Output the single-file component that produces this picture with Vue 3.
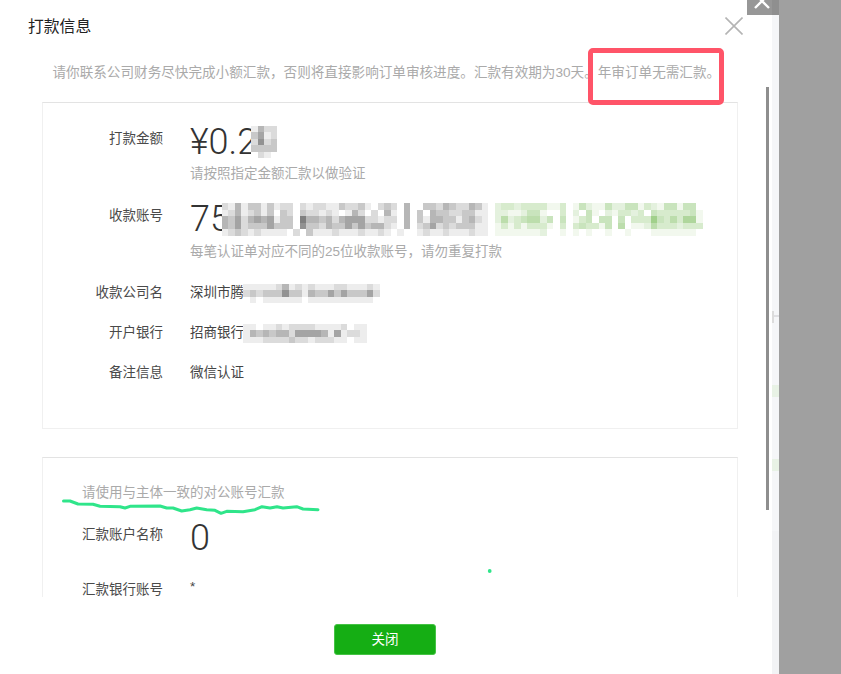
<script setup>
const GRAY = [62, 62, 62]
const GREEN = [126, 190, 96]

function cells(rows, greenFrom = Infinity) {
  const out = []
  rows.forEach((row, r) => {
    ;[...row].forEach((ch, c) => {
      const t = Number(ch) / 9 * 0.85
      const base = c >= greenFrom ? GREEN : GRAY
      const k = c >= greenFrom ? t * 1.1 : t
      const rgb = base.map((v) => Math.round(255 + (v - 255) * Math.min(k, 1)))
      out.push({ id: `${r}-${c}`, color: `rgb(${rgb.join(',')})` })
    })
  })
  return out
}

const amountMask = { cols: 4, cells: cells(['1422', '3512', '2623', '3333', '0210']) }
const accountMask = {
  cols: 74,
  cells: cells(
    [
      '21413313122021221132231' + '023204003324322431023323' + '333113014211422441321441440',
      '12412313032032212101420' + '204104030433223311022112' + '441003020410213323043333341',
      '43524545133074434245552' + '212204031443313421025234' + '552404013404404033374353661',
      '43523335333063324335353' + '442104023523233311013131' + '333103034331405011253332333',
      '12321211110203111211121' + '121010012112111211011111' + '112001010100100100011111110',
    ].map((r) => r.slice(0, 74)),
    41
  ),
}
const companyMask = {
  cols: 21,
  cells: cells(['111112412121112211121', '232333633143353533352', '010111111011111111110']),
}
const bankMask = {
  cols: 19,
  cells: cells(['1101121222211112011', '1434344255554151221', '1112222322122211011']),
}

const scribble =
  '63.5,501 70,501 78,504 93,504.3 100,506.3 120,506.7 125,508 130,506.3 160,506 166.7,508 173,508 181.7,511 190,509.7 196.7,508 206.7,509.7 215,510.3 221,513.3 226.7,511.3 243,511.7 255,509.7 262,506.7 270,508 277,506.7 283,508 296.7,506.7 303,509 318,509.7'

const maskStyle = (m) => ({ gridTemplateColumns: `repeat(${m.cols}, 6.5px)` })
</script>

<template>
  <div class="page">
    <section class="dialog">
      <header class="head">
        <h1 class="title">打款信息</h1>
        <svg class="close" width="18" height="18" viewBox="0 0 18 18" aria-label="关闭">
          <path d="M0.5 0.5 L17.5 17.5 M17.5 0.5 L0.5 17.5" stroke="#b4b4b4" stroke-width="1.6" fill="none" />
        </svg>
      </header>

      <p class="intro">请你联系公司财务尽快完成小额汇款&#65292;否则将直接影响订单审核进度。汇款有效期为30天。年审订单无需汇款。</p>

      <div class="scroll">
        <div class="card card-first">
          <div class="row">
            <span class="label">打款金额</span>
            <div class="value">
              <div class="big">
                ¥0.2<span class="mask mask-amount" :style="maskStyle(amountMask)"><i v-for="c in amountMask.cells" :key="c.id" :style="{ background: c.color }"></i></span>
              </div>
              <div class="hint hint-gap-a">请按照指定金额汇款以做验证</div>
            </div>
          </div>
          <div class="row row-account">
            <span class="label">收款账号</span>
            <div class="value">
              <div class="big">
                75<span class="mask mask-account" :style="maskStyle(accountMask)"><i v-for="c in accountMask.cells" :key="c.id" :style="{ background: c.color }"></i></span>
              </div>
              <div class="hint hint-gap-b">每笔认证单对应不同的25位收款账号&#65292;请勿重复打款</div>
            </div>
          </div>
          <div class="row row-company">
            <span class="label">收款公司名</span>
            <div class="value plain">
              深圳市腾<span class="mask mask-line" :style="maskStyle(companyMask)"><i v-for="c in companyMask.cells" :key="c.id" :style="{ background: c.color }"></i></span>
            </div>
          </div>
          <div class="row row-next">
            <span class="label">开户银行</span>
            <div class="value plain">
              招商银行<span class="mask mask-line" :style="maskStyle(bankMask)"><i v-for="c in bankMask.cells" :key="c.id" :style="{ background: c.color }"></i></span>
            </div>
          </div>
          <div class="row row-next">
            <span class="label">备注信息</span>
            <div class="value plain">微信认证</div>
          </div>
        </div>

        <div class="card card-second">
          <div class="tip">请使用与主体一致的对公账号汇款</div>
          <div class="row row-payer">
            <span class="label">汇款账户名称</span>
            <div class="value"><div class="big">0</div></div>
          </div>
          <div class="row row-bank">
            <span class="label">汇款银行账号</span>
            <div class="value plain star">*</div>
          </div>
        </div>
      </div>

      <footer class="foot">
        <button class="btn" type="button">关闭</button>
      </footer>
    </section>

    <aside class="strip">
      <span class="ghost ghost-gray"></span>
      <span class="ghost ghost-green g1"></span>
      <span class="ghost ghost-green g2"></span>
      <span class="strip-low"></span>
    </aside>
    <div class="backdrop"></div>

    <div class="corner">
      <svg width="25" height="15" viewBox="0 0 25 15">
        <path d="M8 8 L22 -6 M8 -6 L22 8" stroke="#fff" stroke-width="2.4" fill="none" />
      </svg>
    </div>
    <span class="corner-side"></span>

    <span class="scrollbar"></span>
    <span class="red-box"></span>
    <svg class="ink" width="841" height="674" viewBox="0 0 841 674">
      <polyline :points="scribble" fill="none" stroke="#2fe58a" stroke-width="3" stroke-linecap="round" stroke-linejoin="round" />
      <circle cx="489.7" cy="571" r="1.9" fill="#2fe58a" />
    </svg>
  </div>
</template>

<style>
html,
body {
  margin: 0;
  background: #fff;
}
</style>

<style scoped>
.page {
  position: relative;
  display: flex;
  width: 841px;
  height: 674px;
  overflow: hidden;
  background: #fff;
  font-family: "Liberation Sans", "Noto Sans CJK SC", sans-serif;
}
.dialog {
  display: flex;
  flex-direction: column;
  width: 772px;
  flex: none;
  background: #fff;
}
.head {
  display: flex;
  align-items: center;
  justify-content: space-between;
  height: 52px;
  padding: 0 29px 2px 28px;
  box-sizing: border-box;
}
.title {
  margin: 0;
  font-size: 15.8px;
  font-weight: 400;
  color: #222;
}
.close {
  margin-top: 2px;
}
.intro {
  margin: 0;
  padding: 1px 0 0 52.5px;
  height: 40px;
  line-height: 40px;
  font-size: 13.6px;
  color: #aaa;
  white-space: nowrap;
}
.scroll {
  margin-top: 9px;
  height: 495px;
  padding-left: 42px;
  overflow: hidden;
}
.card {
  width: 696px;
  box-sizing: border-box;
  border: 1px solid #f0f0f0;
  border-top-color: #e3e3e3;
}
.card-first {
  height: 327px;
  padding-top: 19px;
}
.card-second {
  margin-top: 28px;
  height: 200px;
  padding-top: 25px;
}
.row {
  display: grid;
  grid-template-columns: 120px 1fr;
  column-gap: 27px;
}
.row-account {
  margin-top: 15px;
}
.row-company {
  margin-top: 14px;
}
.row-next {
  margin-top: 8px;
}
.row-payer {
  margin-top: 15px;
}
.row-bank {
  margin-top: 15px;
}
.label {
  padding-top: 2px;
  text-align: right;
  line-height: 30px;
  font-size: 13.5px;
  color: #4a4a4a;
  white-space: nowrap;
}
.value {
  min-width: 0;
}
.plain {
  display: flex;
  align-items: center;
  height: 30px;
  padding-top: 2px;
  line-height: 30px;
  font-size: 13.5px;
  color: #444;
  white-space: nowrap;
}
.star {
  align-items: flex-start;
  line-height: 24px;
}
.big {
  display: flex;
  align-items: center;
  height: 40px;
  font-family: Roboto, "Liberation Sans", sans-serif;
  font-weight: 300;
  font-size: 36px;
  line-height: 40px;
  color: #333;
}
.hint {
  height: 20px;
  line-height: 20px;
  font-size: 13.5px;
  color: #aaa;
  white-space: nowrap;
}
.hint-gap-a {
  margin-top: 2px;
}
.hint-gap-b {
  margin-top: 3px;
}
.tip {
  margin-left: 39px;
  height: 20px;
  line-height: 20px;
  font-size: 13.5px;
  color: #aaa;
}
.mask {
  display: inline-grid;
  grid-auto-rows: 6.5px;
  flex: none;
}
.mask i {
  display: block;
}
.mask-amount {
  margin-left: -6px;
}
.mask-account {
  margin-left: -8px;
  margin-top: 1px;
}
.mask-line {
  margin-top: 1px;
  margin-left: -1px;
}
.foot {
  display: flex;
  justify-content: center;
  padding: 27px 2px 0 0;
}
.btn {
  width: 102px;
  height: 31px;
  padding: 0 0 3px;
  box-sizing: border-box;
  border: 1px solid #45c345;
  border-radius: 3px;
  background: #15ae14;
  color: #fff;
  font-family: inherit;
  font-size: 13.5px;
}
.strip {
  position: relative;
  width: 7px;
  flex: none;
  background: #f5f6f8;
}
.strip-low {
  position: absolute;
  left: 0;
  right: 0;
  top: 531px;
  bottom: 0;
  background: #f2f3f5;
}
.ghost {
  position: absolute;
  left: 0;
  width: 7px;
  height: 12px;
}
.ghost-gray {
  top: 311px;
  background: linear-gradient(90deg, #dcdcdc 0 2px, transparent 2px), linear-gradient(#0000 0 4px, #dfdfe2 4px 6px, #0000 6px);
}
.ghost-green {
  background: #e8f2e5;
}
.g1 {
  top: 385px;
}
.g2 {
  top: 459px;
}
.backdrop {
  flex: 1;
  background: #a0a0a0;
}
.corner {
  position: absolute;
  left: 747px;
  top: 0;
  width: 25px;
  height: 15px;
  background: #979797;
}
.corner svg {
  display: block;
}
.corner-side {
  position: absolute;
  left: 772px;
  top: 0;
  width: 7px;
  height: 15px;
  background: #8f8f8f;
}
.scrollbar {
  position: absolute;
  left: 766px;
  top: 87px;
  width: 3px;
  height: 423px;
  background: #8e8e8e;
}
.red-box {
  position: absolute;
  left: 588px;
  top: 48px;
  width: 136px;
  height: 57px;
  box-sizing: border-box;
  border: 5px solid #ff5468;
  border-radius: 5px;
}
.ink {
  position: absolute;
  left: 0;
  top: 0;
  pointer-events: none;
}
</style>
